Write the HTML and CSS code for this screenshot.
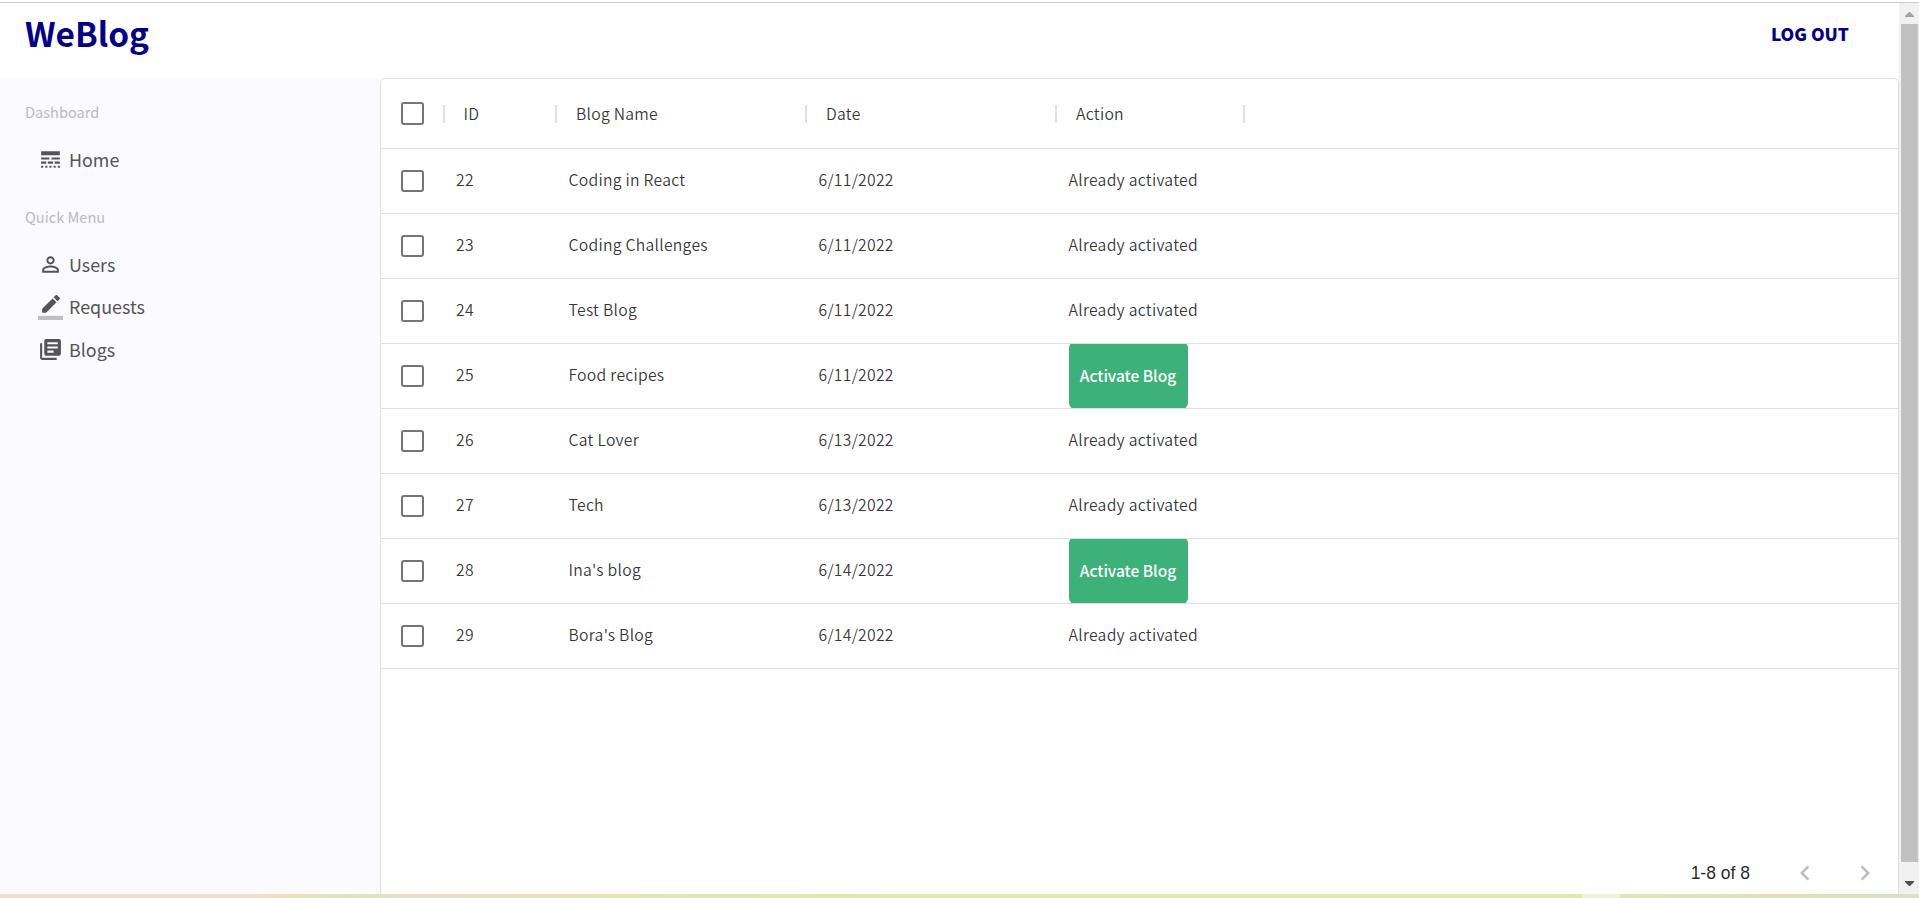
FILE: index.html
```html
<!DOCTYPE html>
<html lang="en">
<head>
<meta charset="utf-8">
<title>WeBlog</title>
<link rel="stylesheet" href="styles.css">
</head>
<body>
<div class="window">
  <div class="page">
    <header class="topbar"><span class="logo">WeBlog</span><a class="logout">LOG OUT</a></header>
    <div class="main">
      <aside class="sidebar">
        <h3 class="menu-title">Dashboard</h3>
        <ul class="menu">
          <li class="menu-item"><svg class="icon" viewBox="0 0 24 24"><path d="M3 16h5v-2H3v2zm6.5 0h5v-2h-5v2zm6.5 0h5v-2h-5v2zM3 20h2v-2H3v2zm4 0h2v-2H7v2zm4 0h2v-2h-2v2zm4 0h2v-2h-2v2zm4 0h2v-2h-2v2zM3 12h8v-2H3v2zm10 0h8v-2h-8v2zM3 4v4h18V4H3z"/></svg><span>Home</span></li>
        </ul>
        <h3 class="menu-title">Quick Menu</h3>
        <ul class="menu">
          <li class="menu-item"><svg class="icon" viewBox="0 0 24 24"><path d="M12 5.9c1.16 0 2.1.94 2.1 2.1s-.94 2.1-2.1 2.1S9.900 9.160 9.900 8s.94-2.100 2.100-2.100m0 9c2.970 0 6.100 1.460 6.100 2.100v1.100H5.900V17c0-.64 3.130-2.100 6.100-2.100M12 4C9.790 4 8 5.790 8 8s1.790 4 4 4 4-1.790 4-4-1.790-4-4-4zm0 9c-2.670 0-8 1.340-8 4v3h16v-3c0-2.660-5.330-4-8-4z"/></svg><span>Users</span></li>
          <li class="menu-item"><svg class="icon" viewBox="0 0 24 24"><path d="M17.750 7L14 3.250l-10 10V17h3.750l10-10zm2.960-2.960c.39-.39.39-1.020 0-1.410L18.370.29c-.39-.39-1.020-.39-1.410 0L15 2.250 18.750 6l1.960-1.960z"/><path fill-opacity=".36" d="M0 20h24v4H0z"/></svg><span>Requests</span></li>
          <li class="menu-item"><svg class="icon" viewBox="0 0 24 24"><path d="M4 6H2v14c0 1.100.9 2 2 2h14v-2H4V6zm16-4H8c-1.100 0-2 .9-2 2v12c0 1.100.9 2 2 2h12c1.100 0 2-.9 2-2V4c0-1.100-.9-2-2-2zm-1 9H9V9h10v2zm-4 4H9v-2h6v2zm4-8H9V5h10v2z"/></svg><span>Blogs</span></li>
        </ul>
      </aside>
      <section class="grid">
        <div class="row head"><div class="check"><i class="box"></i></div><div class="cell">ID</div><div class="cell">Blog Name</div><div class="cell">Date</div><div class="cell">Action</div></div>
        <div class="row"><div class="check"><i class="box"></i></div><div class="cell">22</div><div class="cell">Coding in React</div><div class="cell">6/11/2022</div><div class="cell">Already activated</div></div>
        <div class="row"><div class="check"><i class="box"></i></div><div class="cell">23</div><div class="cell">Coding Challenges</div><div class="cell">6/11/2022</div><div class="cell">Already activated</div></div>
        <div class="row"><div class="check"><i class="box"></i></div><div class="cell">24</div><div class="cell">Test Blog</div><div class="cell">6/11/2022</div><div class="cell">Already activated</div></div>
        <div class="row"><div class="check"><i class="box"></i></div><div class="cell">25</div><div class="cell">Food recipes</div><div class="cell">6/11/2022</div><div class="cell"><button class="activate">Activate Blog</button></div></div>
        <div class="row"><div class="check"><i class="box"></i></div><div class="cell">26</div><div class="cell">Cat Lover</div><div class="cell">6/13/2022</div><div class="cell">Already activated</div></div>
        <div class="row"><div class="check"><i class="box"></i></div><div class="cell">27</div><div class="cell">Tech</div><div class="cell">6/13/2022</div><div class="cell">Already activated</div></div>
        <div class="row"><div class="check"><i class="box"></i></div><div class="cell">28</div><div class="cell">Ina's blog</div><div class="cell">6/14/2022</div><div class="cell"><button class="activate">Activate Blog</button></div></div>
        <div class="row"><div class="check"><i class="box"></i></div><div class="cell">29</div><div class="cell">Bora's Blog</div><div class="cell">6/14/2022</div><div class="cell">Already activated</div></div>
        <footer class="pager"><span>1-8 of 8</span>
          <svg class="arrow prev" viewBox="0 0 24 24"><path d="M15.410 7.410L14 6l-6 6 6 6 1.410-1.410L10.830 12z"/></svg>
          <svg class="arrow" viewBox="0 0 24 24"><path d="M10 6L8.590 7.410 13.170 12l-4.580 4.590L10 18l6-6z"/></svg>
        </footer>
      </section>
    </div>
  </div>
  <div class="scrollbar">
    <svg class="tip up" viewBox="0 0 9 5"><path d="M4 0h1l4 4v1H0V4z"/></svg>
    <div class="thumb"></div>
    <svg class="tip down" viewBox="0 0 9 5"><path d="M0 0h9v1L5 5H4L0 1z"/></svg>
  </div>
</div>
<div class="desktop"><div class="desktop-tab"></div></div>
</body>
</html>
```
FILE: styles.css
```css
* { box-sizing: border-box; }
body { margin: 0; height: 898px; overflow: hidden; display: flex; flex-direction: column; background: #fff; font-family: "Noto Sans CJK JP", "Noto Sans", sans-serif; }
.window { margin-top: 2px; height: 892px; border-top: 1px solid #ccc; display: flex; }
.page { flex: 1; display: flex; flex-direction: column; min-width: 0; }
.topbar { height: 75px; padding: 0 50px 15px 25px; display: flex; align-items: center; justify-content: space-between; color: #00008b; font-weight: 700; }
.logo { font-size: 33.4px; line-height: 40px; }
.logout { font-size: 17.4px; font-weight: 900; line-height: 24px; padding-top: 1px; }
.main { flex: 1; display: flex; min-height: 0; }
.sidebar { width: 380px; background: #fbfaff; padding: 24px 25px; color: #555; }
.menu-title { margin: 0; height: 24px; font-size: 14.6px; line-height: 20px; font-weight: 400; color: #bbbaba; }
.menu { list-style: none; margin: 0 0 14.5px; padding: 11.5px 12.5px 12.5px; }
.menu-item { display: flex; align-items: center; height: 42.5px; font-size: 17.9px; line-height: 24px; }
.icon { width: 25px; height: 25px; margin-right: 6.5px; margin-top: 2px; fill: #555; }
.grid { flex: 1; display: flex; flex-direction: column; border: 1px solid #e0e0e0; border-bottom: 0; border-radius: 5px 5px 0 0; color: rgba(0,0,0,.8); font-size: 15.75px; font-weight: 350; letter-spacing: .26px; }
.row { display: grid; grid-template-columns: 62.5px 112.500px 250px 250px 187.500px; height: 65px; border-bottom: 1px solid #e0e0e0; }
.head { height: 70px; }
.check { display: flex; align-items: center; justify-content: center; }
.box { width: 22.500px; height: 22.500px; border: 2.500px solid #757575; border-radius: 3px; }
.cell { display: flex; align-items: center; height: 64px; padding: 0 0 2px 12.500px; line-height: 24px; white-space: nowrap; overflow: hidden; }
.head .cell { height: 69px; padding: 0 0 0 18px; overflow: visible; }
.head .cell::before { content: ""; width: 2px; height: 18px; margin-left: -19px; margin-right: 19px; background: #e0e0e0; }
.head .cell:last-child { position: relative; }
.head .cell:last-child::after { content: ""; position: absolute; right: -1px; width: 2px; height: 18px; background: #e0e0e0; }
.activate { flex: none; height: 67px; width: 119px; padding: 0; border: 0; border-radius: 6px; background: #3cb179; color: #fff; font: 500 15.500px/24px "Noto Sans CJK JP", sans-serif; }
.pager { margin-top: auto; height: 42px; display: flex; align-items: center; padding-right: 18px; color: rgba(0,0,0,.87); font: 400 17.500px/24px "Liberation Sans", sans-serif; letter-spacing: 0; }
.pager span { margin-left: auto; margin-right: 40px; }
.arrow { width: 30px; height: 30px; fill: #bdbdbd; }
.prev { margin-right: 30px; }
.scrollbar { width: 20px; background: #f1f1f1; display: flex; flex-direction: column; align-items: center; padding-top: 9px; }
.tip { width: 9px; height: 5px; }
.up { fill: #a3a3a3; }
.down { fill: #505050; margin-top: 19px; }
.thumb { width: 17px; height: 838px; margin-top: 7px; background: #c1c1c1; }
.desktop { height: 4px; background: linear-gradient(90deg, #efdfca 0, #efdfca 250px, #e9e4b5 290px, #dfe3bd 350px, #eadfc8 430px, #e6e5b0 620px, #e3e9a6 1000px, #e3e9a6 1540px, #dde5b8 1680px, #e4e0b7 1780px, #d5e3c1 1880px, #d5e3c1); }
.desktop-tab { margin-left: 1582px; width: 38px; height: 4px; background: #f0f3dc; }
```
